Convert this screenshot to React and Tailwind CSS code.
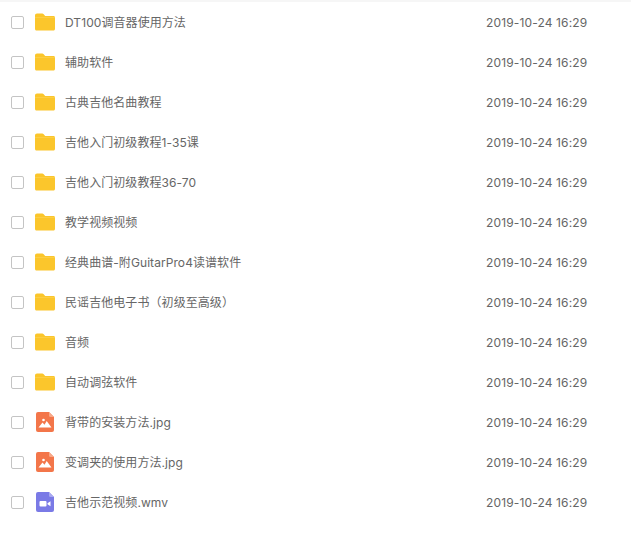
const rows = [
  { name: 'DT100调音器使用方法', type: 'folder' },
  { name: '辅助软件', type: 'folder' },
  { name: '古典吉他名曲教程', type: 'folder' },
  { name: '吉他入门初级教程1-35课', type: 'folder' },
  { name: '吉他入门初级教程36-70', type: 'folder' },
  { name: '教学视频视频', type: 'folder' },
  { name: '经典曲谱-附GuitarPro4读谱软件', type: 'folder' },
  { name: '民谣吉他电子书（初级至高级）', type: 'folder' },
  { name: '音频', type: 'folder' },
  { name: '自动调弦软件', type: 'folder' },
  { name: '背带的安装方法.jpg', type: 'image' },
  { name: '变调夹的使用方法.jpg', type: 'image' },
  { name: '吉他示范视频.wmv', type: 'video' },
];

function FolderIcon() {
  return (
    <svg width="22" height="18" viewBox="0 0 22 18">
      <path d="M1 2.5C1 1.4 1.8.5 3 .5h5.2c.6 0 1.1.3 1.500.7L11.200 3H19.500c.9 0 1.500.7 1.500 1.500V16c0 .9-.7 1.500-1.500 1.500h-17C1.700 17.500 1 16.900 1 16z" fill="#fbc62c" />
      <path d="M1 4.500h20" stroke="#fdd456" strokeWidth="0.6" />
    </svg>
  );
}

function ImageIcon() {
  return (
    <svg width="18" height="20" viewBox="0 0 18 20">
      <path d="M2 0h11l5 5v13a2 2 0 0 1-2 2H2a2 2 0 0 1-2-2V2a2 2 0 0 1 2-2z" fill="#f3764a" />
      <path d="M13 0l5 5h-3.500A1.500 1.500 0 0 1 13 3.500z" fill="#f8a888" />
      <circle cx="7.500" cy="8" r="1.300" fill="#fff" />
      <path d="M2.500 15.500l4-5 2 2.200 2.200-3.700 4.800 6.500z" fill="#fff" />
    </svg>
  );
}

function VideoIcon() {
  return (
    <svg width="18" height="20" viewBox="0 0 18 20">
      <path d="M2 0h11l5 5v13a2 2 0 0 1-2 2H2a2 2 0 0 1-2-2V2a2 2 0 0 1 2-2z" fill="#7a7ae6" />
      <path d="M13 0l5 5h-3.500A1.500 1.500 0 0 1 13 3.500z" fill="#a9a9f1" />
      <rect x="3.500" y="9" width="7" height="5.500" rx="1" fill="#fff" />
      <path d="M11.500 11.200l3-2v5l-3-2z" fill="#fff" />
    </svg>
  );
}

function RowIcon({ type }) {
  if (type === 'folder') return <FolderIcon />;
  if (type === 'image') return <ImageIcon />;
  return <VideoIcon />;
}

export default function App() {
  return (
    <div className="w-[631px] h-[540px] bg-white overflow-hidden font-['Inter','Noto_Sans_CJK_SC',sans-serif] text-[12px] text-[#666666]">
      <div className="h-[2px] bg-[#f6f6f6]"></div>
      <div>
        {rows.map((r, i) => (
          <div key={i} className="flex items-center h-[40px]">
            <div className="ml-[11px] w-[13px] h-[13px] border border-[#c4c4c4] rounded-[2px] bg-white"></div>
            <div className="ml-[10px] w-[22px] flex justify-center">
              <RowIcon type={r.type} />
            </div>
            <div className="ml-[9px] flex-1 pt-[2px] tracking-[0.07px]">{r.name}</div>
            <div className="w-[145px] pt-[2px] tracking-[0.14px]">2019-10-24 16:29</div>
          </div>
        ))}
      </div>
    </div>
  );
}
